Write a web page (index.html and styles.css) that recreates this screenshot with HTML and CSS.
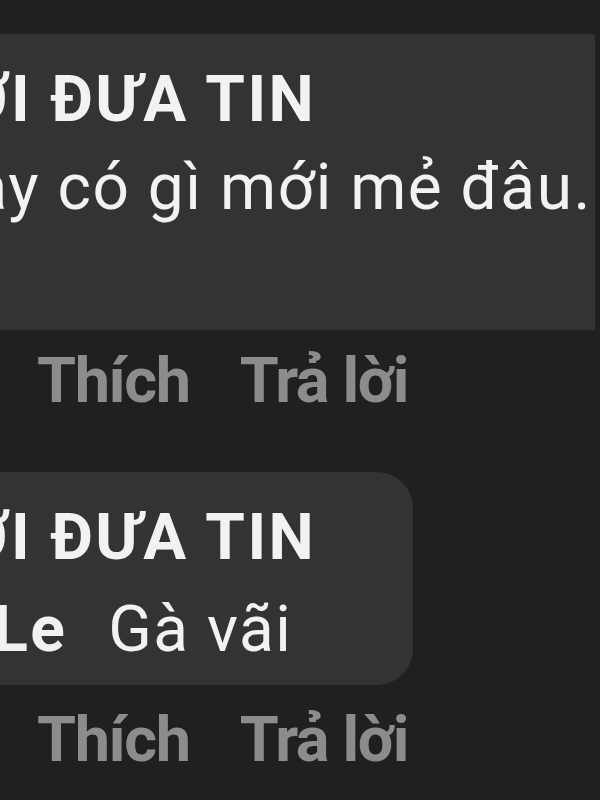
FILE: index.html
```html
<!DOCTYPE html>
<html lang="vi">

<head>
    <meta charset="utf-8">
    <meta name="viewport" content="width=device-width, initial-scale=1.0">
    <title>Bình luận</title>
    <link rel="stylesheet" href="styles.css">
</head>

<body>

    <main class="thread">

        <article class="comment">
            <div class="bubble bubble-wide">
                <h3 class="author">NGƯỜI ĐƯA TIN</h3>
                <p class="text">Giờ nay có gì mới mẻ đâu.</p>
            </div>
            <div class="actions">
                <button class="action">Thích</button>
                <button class="action">Trả lời</button>
            </div>
        </article>

        <article class="comment reply">
            <div class="bubble">
                <h3 class="author">NGƯỜI ĐƯA TIN</h3>
                <p class="text"><span class="tag">Tuan Le</span>Gà vãi</p>
            </div>
            <div class="actions">
                <button class="action">Thích</button>
                <button class="action">Trả lời</button>
            </div>
        </article>

    </main>

</body>

</html>
```

FILE: styles.css
```css
* {
    box-sizing: border-box;
}

body {
    margin: 0;
    background-color: #202020;
    font-family: Roboto, "Noto Sans", sans-serif;
    overflow: hidden;
}

.thread {
    /* the screenshot is cropped: the comments start left of the window */
    margin-left: -200px;
    padding-top: 34px;
}

.comment {
    margin-bottom: 47px;
}

.bubble {
    display: inline-block;
    background-color: #333333;
    color: #f2f2f2;
    padding: 22px 97px 11px 22px;
    border-radius: 36px;
}

.bubble-wide {
    display: block;
    margin-right: 5px;
    padding-bottom: 98px;
    border-radius: 0 4px 0 0;
}

.author {
    margin: 0;
    font-size: 64px;
    line-height: 88px;
    font-weight: 700;
    letter-spacing: 2.4px;
}

.text {
    margin: 0;
    font-size: 64px;
    line-height: 88px;
    letter-spacing: 1.5px;
    white-space: nowrap;
}

.bubble-wide .text {
    text-indent: -4px;
}

.reply .text {
    margin-top: 4px;
}

.tag {
    font-weight: 700;
    letter-spacing: 2.4px;
    margin-right: 41px;
}

.actions {
    display: flex;
    gap: 50px;
    padding-left: 237px;
    margin-top: 7px;
}

.reply .actions {
    margin-top: 11px;
}

.action {
    border: none;
    background: none;
    padding: 0;
    color: #8c8c8c;
    font-family: Roboto, "Noto Sans", sans-serif;
    font-size: 63px;
    line-height: 88px;
    font-weight: 700;
    letter-spacing: -1.4px;
}
```
